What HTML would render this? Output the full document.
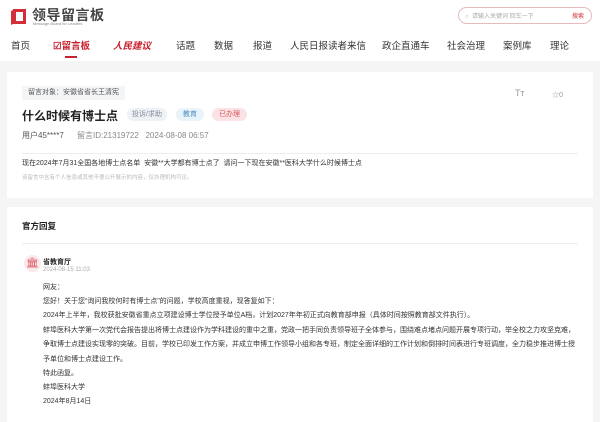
<!DOCTYPE html>
<html><head><meta charset="utf-8"><style>
*{margin:0;padding:0;box-sizing:border-box}
body{width:600px;height:415px;overflow:hidden;background:#f5f5f5;font-family:"Liberation Sans","Noto Sans CJK SC",sans-serif;color:#333;position:relative}
.a{position:absolute;white-space:nowrap}
#hd{position:absolute;left:0;top:0;width:600px;height:61px;background:#fff}
.nav{top:38px;font-size:9.5px;color:#333}
.card{position:absolute;left:7px;width:586px;background:#fff}
.tag{position:absolute;height:13px;border-radius:7px;font-size:7px;line-height:13px;text-align:center}
.p{position:absolute;left:43px;font-size:7px;color:#333;white-space:nowrap}
</style></head><body>
<div id="hd">
 <svg class="a" style="left:10px;top:8px" width="18" height="17" viewBox="0 0 18 17"><path d="M3 1h13v15H3z M6 4v9h7V4z" fill="#d1303a" fill-rule="evenodd"/><path d="M1 3l4-2v14l-4 2z" fill="#d1303a"/></svg>
 <div class="a" style="left:32px;top:5px;font-size:14px;font-weight:bold;color:#444;letter-spacing:0.5px">领导留言板</div>
 <div class="a" style="left:33px;top:21px;font-size:4px;color:#888">Message Board for Leaders</div>
 <div class="a" style="left:458px;top:7px;width:134px;height:17px;border:1px solid #e9b9bd;border-radius:9px"></div>
 <div class="a" style="left:465px;top:11px;font-size:6px;color:#aaa">○ &nbsp;请输入关键词 回车一下</div>
 <div class="a" style="left:572px;top:11px;font-size:6px;color:#d1303a">搜索</div>
 <div class="a nav" style="left:11px">首页</div>
 <div class="a nav" style="left:53px;color:#c8202d;font-weight:bold">☑留言板</div>
 <div class="a" style="left:65px;top:56px;width:12px;height:2px;background:#c8202d"></div>
 <div class="a nav" style="left:113px;color:#c8202d;font-weight:bold;font-style:italic">人民建议</div>
 <div class="a nav" style="left:176px">话题</div>
 <div class="a nav" style="left:214px">数据</div>
 <div class="a nav" style="left:253px">报道</div>
 <div class="a nav" style="left:290px">人民日报读者来信</div>
 <div class="a nav" style="left:382px">政企直通车</div>
 <div class="a nav" style="left:447px">社会治理</div>
 <div class="a nav" style="left:503px">案例库</div>
 <div class="a nav" style="left:550px">理论</div>
</div>
<div class="card" style="top:72px;height:126px">
 <div class="a" style="left:15px;top:14px;height:14px;padding:0 6px;background:#f4f5f7;font-size:7px;line-height:14px;color:#555">留言对象：安徽省省长王清宪</div>
 <div class="a" style="left:508px;top:16px;font-size:9px;color:#999">Tт</div>
 <div class="a" style="left:545px;top:18px;font-size:7px;color:#999">☆0</div>
 <div class="a" style="left:15px;top:35px;font-size:12px;font-weight:bold;color:#222">什么时候有博士点</div>
 <div class="tag" style="left:120px;top:36px;width:40px;background:#eef2f7;color:#889">投诉/求助</div>
 <div class="tag" style="left:169px;top:36px;width:28px;background:#e8f3fa;color:#4a8ac0">教育</div>
 <div class="tag" style="left:205px;top:36px;width:35px;background:#fbe3e5;color:#d9535e">已办理</div>
 <div class="a" style="left:15px;top:58px;font-size:8px;color:#555">用户45****7</div>
 <div class="a" style="left:70px;top:58px;font-size:8px;color:#888">留言ID:21319722 &nbsp;&nbsp;2024-08-08 06:57</div>
 <div class="a" style="left:15px;top:81px;width:556px;border-top:1px solid #eee"></div>
 <div class="a" style="left:15px;top:86px;font-size:7px;color:#333">现在2024年7月31全国各地博士点名单 &nbsp;安徽**大学都有博士点了 &nbsp;请问一下现在安徽**医科大学什么时候博士点</div>
 <div class="a" style="left:15px;top:101px;font-size:5.5px;color:#bbb">该留言中含有个人信息或其他不便公开展示的内容，仅办理机构可见。</div>
</div>
<div class="card" style="top:207px;height:215px">
 <div class="a" style="left:15px;top:13px;font-size:8.5px;font-weight:bold;color:#222">官方回复</div>
 <div class="a" style="left:15px;top:36px;width:556px;border-top:1px solid #eee"></div>
 <div class="a" style="left:17px;top:48px;width:17px;height:17px;border-radius:50%;background:#fbe8ea;color:#d9535e;font-size:10px;text-align:center;line-height:17px">🏛</div>
 <div class="a" style="left:36px;top:50px;font-size:7px;font-weight:bold;color:#222">省教育厅</div>
 <div class="a" style="left:36px;top:60px;font-size:6px;color:#aaa">2024-08-15 11:03</div>
</div>
<div class="p" style="top:282px">网友：</div>
<div class="p" style="top:296px">您好！关于您“询问我校何时有博士点”的问题，学校高度重视，现答复如下：</div>
<div class="p" style="top:310px">2024年上半年，我校获批安徽省重点立项建设博士学位授予单位A档，计划2027年年初正式向教育部申报（具体时间按照教育部文件执行）。</div>
<div class="p" style="top:325px">蚌埠医科大学第一次党代会报告提出将博士点建设作为学科建设的重中之重，党政一把手同负责领导班子全体参与，围绕难点堵点问题开展专项行动，举全校之力攻坚克难，</div>
<div class="p" style="top:339px">争取博士点建设实现零的突破。目前，学校已印发工作方案，并成立申博工作领导小组和各专班，制定全面详细的工作计划和倒排时间表进行专班调度，全力稳步推进博士授</div>
<div class="p" style="top:354px">予单位和博士点建设工作。</div>
<div class="p" style="top:368px">特此函复。</div>
<div class="p" style="top:382px">蚌埠医科大学</div>
<div class="p" style="top:396px">2024年8月14日</div>
</body></html>
